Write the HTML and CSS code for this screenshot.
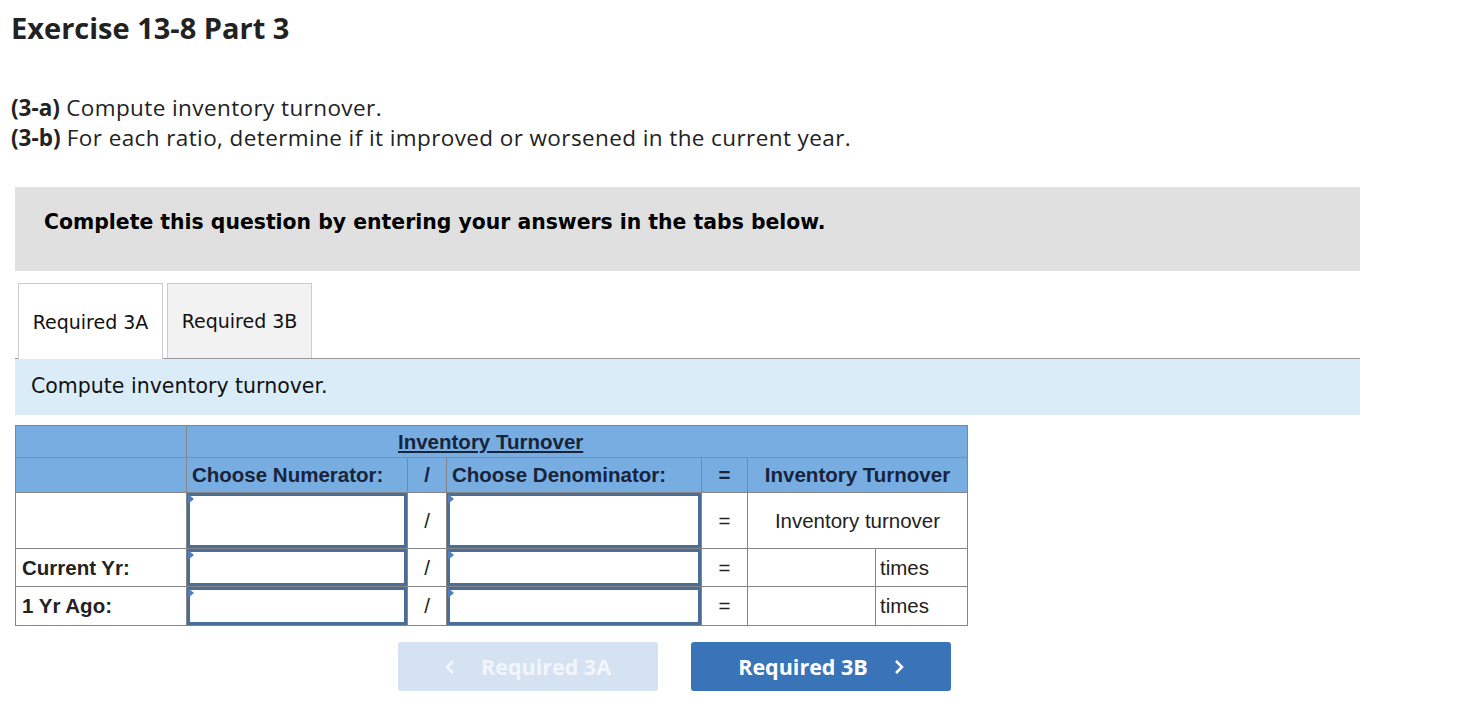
FILE: index.html
```html
<!DOCTYPE html>
<html lang="en">
  <head>
    <meta charset="UTF-8" />
    <meta name="viewport" content="width=device-width, initial-scale=1.0" />
    <title>Exercise 13-8 Part 3</title>
    <link rel="stylesheet" href="styles.css">
  </head>
  <body>
    <h1 class="title">Exercise 13-8 Part 3</h1>

    <p class="requirements">
      <b>(3-a)</b> Compute inventory turnover.<br />
      <b>(3-b)</b> For each ratio, determine if it improved or worsened in the current year.
    </p>

    <div class="prompt">Complete this question by entering your answers in the tabs below.</div>

    <div class="tabs">
      <div class="tab active">Required 3A</div>
      <div class="tab">Required 3B</div>
    </div>

    <div class="tab-intro">Compute inventory turnover.</div>

    <table class="ratio-table">
      <tr class="head">
        <th></th>
        <th colspan="6" class="caption"><u>Inventory Turnover</u></th>
      </tr>
      <tr class="head">
        <th></th>
        <th class="left">Choose Numerator:</th>
        <th>/</th>
        <th class="left">Choose Denominator:</th>
        <th>=</th>
        <th colspan="2">Inventory Turnover</th>
      </tr>
      <tr class="row-tall">
        <td></td>
        <td class="entry"><div class="box"></div></td>
        <td class="op">/</td>
        <td class="entry"><div class="box"></div></td>
        <td class="op">=</td>
        <td colspan="2" class="center">Inventory turnover</td>
      </tr>
      <tr>
        <td class="label">Current Yr:</td>
        <td class="entry"><div class="box"></div></td>
        <td class="op">/</td>
        <td class="entry"><div class="box"></div></td>
        <td class="op">=</td>
        <td class="result"></td>
        <td class="unit">times</td>
      </tr>
      <tr>
        <td class="label">1 Yr Ago:</td>
        <td class="entry"><div class="box"></div></td>
        <td class="op">/</td>
        <td class="entry"><div class="box"></div></td>
        <td class="op">=</td>
        <td class="result"></td>
        <td class="unit">times</td>
      </tr>
    </table>

    <div class="step-nav">
      <button class="step prev" disabled>
        <svg class="chev" width="10" height="16" viewBox="0 0 10 16"><polyline points="8,2 2,8 8,14" /></svg>
        Required 3A
      </button>
      <button class="step next">
        Required 3B
        <svg class="chev" width="10" height="16" viewBox="0 0 10 16"><polyline points="2,2 8,8 2,14" /></svg>
      </button>
    </div>
  </body>
</html>
```

FILE: styles.css
```css
* {
  padding: 0;
  margin: 0;
  box-sizing: border-box;
}

body {
  background-color: white;
  color: #222;
  font-family: "Open Sans", Lato, sans-serif;
  width: 1360px;
}

.title {
  font-size: 29px;
  font-weight: 700;
  margin: 9px 0 0 11px;
  line-height: 38px;
}

.requirements {
  margin: 46px 0 0 11px;
  font-size: 22.5px;
  line-height: 30px;
  letter-spacing: 0.4px;
}

.requirements b {
  font-weight: 700;
  letter-spacing: 0;
}

.prompt {
  margin: 34px 0 0 15px;
  height: 84px;
  padding: 23px 0 0 29px;
  background-color: #e0e0e0;
  color: black;
  font-family: "DejaVu Sans", Verdana, sans-serif;
  font-weight: bold;
  font-size: 20.4px;
}

.tabs {
  display: flex;
  gap: 4px;
  margin: 12px 0 0 15px;
  padding-left: 3px;
  border-bottom: 1px solid #999;
}

.tab {
  width: 145px;
  height: 75px;
  display: flex;
  align-items: center;
  justify-content: center;
  border: 1px solid #ccc;
  border-bottom: none;
  background-color: #f2f2f2;
  font-family: "DejaVu Sans", Verdana, sans-serif;
  font-size: 19px;
  color: #111;
}

.tab.active {
  background-color: white;
  margin-bottom: -1px;
  height: 76px;
}

.tab-intro {
  margin-left: 15px;
  height: 56px;
  padding: 15px 0 0 16px;
  background-color: #dbecf9;
  font-family: "DejaVu Sans", Verdana, sans-serif;
  font-size: 20.5px;
  color: #111;
}

.ratio-table {
  margin: 10px 0 0 15px;
  border-collapse: collapse;
  font-family: "Liberation Sans", Arial, sans-serif;
  font-size: 20.5px;
  color: #222;
}

.ratio-table th,
.ratio-table td {
  border: 1px solid #858585;
  padding: 0 5px;
}

.ratio-table th {
  background-color: #78ade2;
  color: #17243a;
  font-weight: bold;
  height: 35px;
}

.ratio-table tr.head:first-child th {
  height: 32px;
  border-bottom-color: #6a94c0;
}

.ratio-table th.caption {
  text-align: left;
  padding-left: 211px;
}

.ratio-table th.left {
  text-align: left;
}

.ratio-table td {
  height: 38px;
}

.ratio-table tr:last-child td {
  height: 39px;
}

.ratio-table tr.row-tall td {
  height: 56px;
}

.ratio-table td:nth-child(1) { width: 171px; }
.ratio-table td.entry { padding: 0; }
.ratio-table td:nth-child(2) { width: 221px; }
.ratio-table td:nth-child(3) { width: 39px; }
.ratio-table td:nth-child(4) { width: 255px; }
.ratio-table td:nth-child(5) { width: 46px; }
.ratio-table td.result { width: 128px; }
.ratio-table td.unit { width: 92px; }

.ratio-table .label {
  font-weight: bold;
  padding-left: 6px;
}

.ratio-table .op,
.ratio-table .center {
  text-align: center;
}

.ratio-table .unit {
  padding-left: 4px;
}

.box {
  position: relative;
  height: 100%;
  border: 3px solid #4b6e96;
  background-color: white;
}

.box::before {
  content: "";
  position: absolute;
  top: -2px;
  left: -2px;
  border-top: 5px solid transparent;
  border-bottom: 5px solid transparent;
  border-left: 6px solid #4f7fbf;
}

.step-nav {
  display: flex;
  gap: 33px;
  margin: 16px 0 0 398px;
}

.step {
  width: 260px;
  height: 49px;
  border: none;
  border-radius: 3px;
  display: flex;
  align-items: center;
  justify-content: center;
  gap: 26px;
  font-family: "Open Sans", sans-serif;
  font-weight: 700;
  font-size: 21.5px;
  color: white;
}

.step.prev {
  background-color: #d5e2f1;
  color: #f2f6fb;
}

.step.next {
  background-color: #3a74b8;
}

.chev polyline {
  fill: none;
  stroke: currentColor;
  stroke-width: 2.5;
}
```
